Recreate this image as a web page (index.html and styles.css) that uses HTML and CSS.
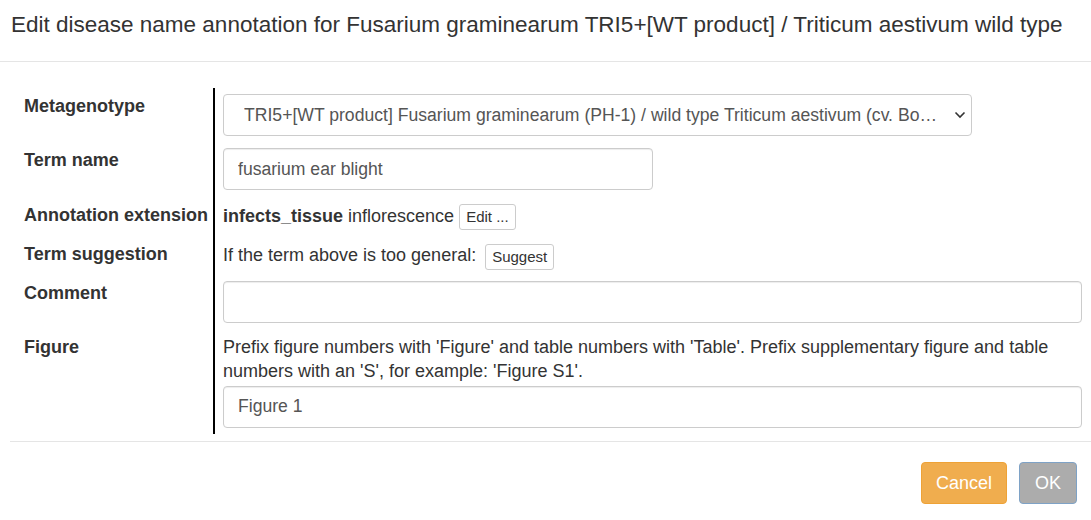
FILE: index.html
```html
<!DOCTYPE html>
<html lang="en">
<head>
<meta charset="utf-8">
<title>Edit disease name annotation</title>
<link rel="stylesheet" href="styles.css">
</head>
<body>
<div class="modal">
  <div class="modal-header">
    <h4 class="modal-title">Edit disease name annotation for Fusarium graminearum TRI5+[WT product] / Triticum aestivum wild type</h4>
  </div>
  <div class="modal-body">
    <div class="form-grid">
      <div class="label-cell">Metagenotype</div>
      <div class="value-cell">
        <div class="select-box">
          <span class="select-text">TRI5+[WT product] Fusarium graminearum (PH-1) / wild type Triticum aestivum (cv. Bo…</span>
          <svg class="chevron" width="12" height="8" viewBox="0 0 12 8"><path d="M1.5 1.5 L6 6 L10.5 1.5" fill="none" stroke="#333" stroke-width="1.6"/></svg>
        </div>
      </div>

      <div class="label-cell">Term name</div>
      <div class="value-cell">
        <input class="text-input term-input" type="text" value="fusarium ear blight">
      </div>

      <div class="label-cell line-label">Annotation extension</div>
      <div class="value-cell line-cell">
        <b>infects_tissue</b> inflorescence <button class="btn-small btn-edit">Edit ...</button>
      </div>

      <div class="label-cell line-label">Term suggestion</div>
      <div class="value-cell line-cell">
        If the term above is too general: <button class="btn-small btn-suggest">Suggest</button>
      </div>

      <div class="label-cell">Comment</div>
      <div class="value-cell">
        <input class="text-input" type="text" value="">
      </div>

      <div class="label-cell">Figure</div>
      <div class="value-cell">
        <div class="help">Prefix figure numbers with 'Figure' and table numbers with 'Table'. Prefix supplementary figure and table numbers with an 'S', for example: 'Figure S1'.</div>
        <input class="text-input figure-input" type="text" value="Figure 1">
      </div>
    </div>
  </div>
  <div class="modal-footer">
    <button class="btn btn-cancel">Cancel</button>
    <button class="btn btn-ok">OK</button>
  </div>
</div>
</body>
</html>
```

FILE: styles.css
```css
* { box-sizing: border-box; }

body {
  margin: 0;
  background: #fff;
  font-family: "Liberation Sans", Arial, sans-serif;
  color: #333;
  font-size: 18px;
  line-height: 24px;
}

.modal {
  width: 1091px;
}

.modal-header {
  height: 62px;
  padding: 10px 11px 0;
  border-bottom: 1px solid #e5e5e5;
}

.modal-title {
  margin: 0;
  font-size: 22.5px;
  font-weight: normal;
  line-height: 30px;
  color: #333;
  white-space: nowrap;
}

.modal-body {
  padding: 26px 9px 7px 15px;
}

.form-grid {
  display: grid;
  grid-template-columns: 200px 1fr;
}

.label-cell {
  padding: 6px 2px 6px 9px;
  font-weight: bold;
  white-space: nowrap;
  border-right: 2px solid #000;
}

.value-cell {
  padding: 6px 0 6px 8px;
}

.line-label {
  padding-top: 7px;
}

.line-cell {
  padding-top: 7px;
  padding-bottom: 5px;
  line-height: 26px;
}

.select-box {
  display: flex;
  align-items: center;
  width: 749px;
  height: 42px;
  padding: 0 5px 0 20px;
  border: 1px solid #ccc;
  border-radius: 4px;
  font-size: 17.6px;
  color: #555;
  background: #fff;
}

.select-text {
  flex: 1;
  min-width: 0;
  overflow: hidden;
  white-space: nowrap;
  text-overflow: ellipsis;
  padding-right: 10px;
}

.chevron {
  flex: none;
}

.text-input {
  display: block;
  width: 100%;
  height: 42px;
  padding: 8px 14px;
  border: 1px solid #ccc;
  border-radius: 4px;
  font-family: inherit;
  font-size: 17.6px;
  line-height: 24px;
  color: #555;
  background: #fff;
  box-shadow: inset 0 1px 1px rgba(0,0,0,0.075);
}

.term-input {
  width: 430px;
}

.figure-input {
  margin-top: 3px;
}

.help {
  color: #333;
}

.btn-small {
  font-family: inherit;
  font-size: 15px;
  line-height: 20px;
  padding: 2px 6px;
  color: #333;
  background: #fff;
  border: 1px solid #ccc;
  border-radius: 3px;
  vertical-align: middle;
}

.btn-edit {
  margin-left: 0;
}

.btn-suggest {
  margin-left: 4px;
}

.modal-footer {
  margin-left: 10px;
  border-top: 1px solid #e5e5e5;
  padding: 20px 14px 16px;
  display: flex;
  justify-content: flex-end;
  gap: 12px;
}

.btn {
  font-family: inherit;
  font-size: 18px;
  line-height: 24px;
  padding: 8px 15px;
  border-radius: 4px;
  color: #fff;
  border: 1px solid transparent;
}

.btn-cancel {
  padding: 8px 14px;
  background: #f0ad4e;
  border-color: #eea236;
}

.btn-ok {
  background: #acacac;
  border-color: #7ea2c6;
}
```
